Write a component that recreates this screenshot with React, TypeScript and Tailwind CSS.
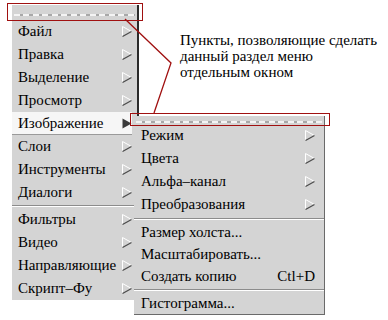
type Item = { label: string; arrow?: boolean; hot?: boolean; accel?: string; short?: boolean } | "sep";

const mainItems: Item[] = [
  { label: "Файл", arrow: true },
  { label: "Правка", arrow: true },
  { label: "Выделение", arrow: true },
  { label: "Просмотр", arrow: true },
  { label: "Изображение", arrow: true, hot: true },
  { label: "Слои", arrow: true },
  { label: "Инструменты", arrow: true },
  { label: "Диалоги", arrow: true },
  "sep",
  { label: "Фильтры", arrow: true },
  { label: "Видео", arrow: true },
  { label: "Направляющие", arrow: true },
  { label: "Скрипт–Фу", arrow: true },
];

const subItems: Item[] = [
  { label: "Режим", arrow: true },
  { label: "Цвета", arrow: true },
  { label: "Альфа–канал", arrow: true },
  { label: "Преобразования", arrow: true },
  "sep",
  { label: "Размер холста...", short: true },
  { label: "Масштабировать...", short: true },
  { label: "Создать копию", accel: "Ctl+D", short: true },
  "sep",
  { label: "Гистограмма...", short: true },
];

const Arrow = ({ dark }: { dark?: boolean }) =>
  dark ? (
    <svg width="10" height="11" viewBox="0 0 10 11">
      <polygon points="0.5,0.5 9.5,5.5 0.5,10.5" fill="#3a3a3a" />
    </svg>
  ) : (
    <svg width="10" height="11" viewBox="0 0 10 11">
      <polyline points="0.5,10.5 0.5,0.5 9.5,5.5" fill="none" stroke="#ffffff" strokeWidth="1" />
      <line x1="9.5" y1="5.5" x2="0.5" y2="10.5" stroke="#4a4a4a" strokeWidth="1.2" />
    </svg>
  );

const Tearoff = ({ className }: { className: string }) => (
  <div className={`flex items-center ${className}`}>
    <div className="w-full h-[2px] bg-[repeating-linear-gradient(90deg,#f4f4f4_0px,#f4f4f4_6px,#a8a8a8_6px,#a8a8a8_9.5px)]" />
  </div>
);

const Separator = ({ h }: { h: string }) => (
  <div className={`flex items-center ${h}`}>
    <div className="w-full border-t border-[#8c8c8c] border-b border-b-white" />
  </div>
);

const MenuRows = ({ items, pad, sepH }: { items: Item[]; pad: string; sepH: string }) => (
  <>
    {items.map((it, i) =>
      it === "sep" ? (
        <Separator key={i} h={sepH} />
      ) : (
        <div
          key={i}
          className={`flex items-center justify-between ${it.short ? "h-[22px]" : "h-[23px]"} ${
            it.hot ? "pl-[6px] mr-[5px] bg-[#f6f6f6] border-b border-[#9a9a9a]" : pad
          }`}
        >
          <span className="text-[15px] text-black whitespace-nowrap">{it.label}</span>
          {it.arrow && <Arrow dark={it.hot} />}
          {it.accel && <span className="text-[15px] text-black">{it.accel}</span>}
        </div>
      )
    )}
  </>
);

export default function App() {
  return (
    <div className="relative w-[388px] h-[320px] bg-white overflow-hidden font-['Liberation_Serif','Times_New_Roman','DejaVu_Serif',serif]">
      {/* main menu */}
      <div className="absolute left-[12px] top-[5px] w-[127px] h-[295px] bg-[#d4d4d4] border-r-2 border-[#2a2a2a] flex flex-col">
        <Tearoff className="h-[15px] px-[2px] pt-[5px]" />
        <MenuRows items={mainItems} pad="pl-[6px] pr-[5px]" sepH="h-[4px]" />
      </div>

      {/* sub menu */}
      <div className="absolute left-[134px] top-[116px] w-[191px] h-[199px] bg-[#d4d4d4] border-r border-b border-[#6a6a6a] flex flex-col">
        <Tearoff className="h-[8px] px-[2px] pt-[3px]" />
        <MenuRows items={subItems} pad="pl-[7px] pr-[9px]" sepH="h-[5px]" />
      </div>

      {/* callout frames and leader line */}
      <div className="absolute left-[7px] top-[3px] w-[136px] h-[18px] border-[1.5px] border-[#a01010]" />
      <div className="absolute left-[130px] top-[113px] w-[200px] h-[13px] border-[1.5px] border-[#a01010]" />
      <svg className="absolute left-0 top-0" width="388" height="320">
        <polyline points="125,19 171,63 154,113" fill="none" stroke="#a01010" strokeWidth="1.3" />
      </svg>

      {/* annotation */}
      <div className="absolute left-[180px] top-[32px] text-[15px] leading-[16px] text-black">
        <div>Пункты, позволяющие сделать</div>
        <div>данный раздел меню</div>
        <div>отдельным окном</div>
      </div>
    </div>
  );
}
